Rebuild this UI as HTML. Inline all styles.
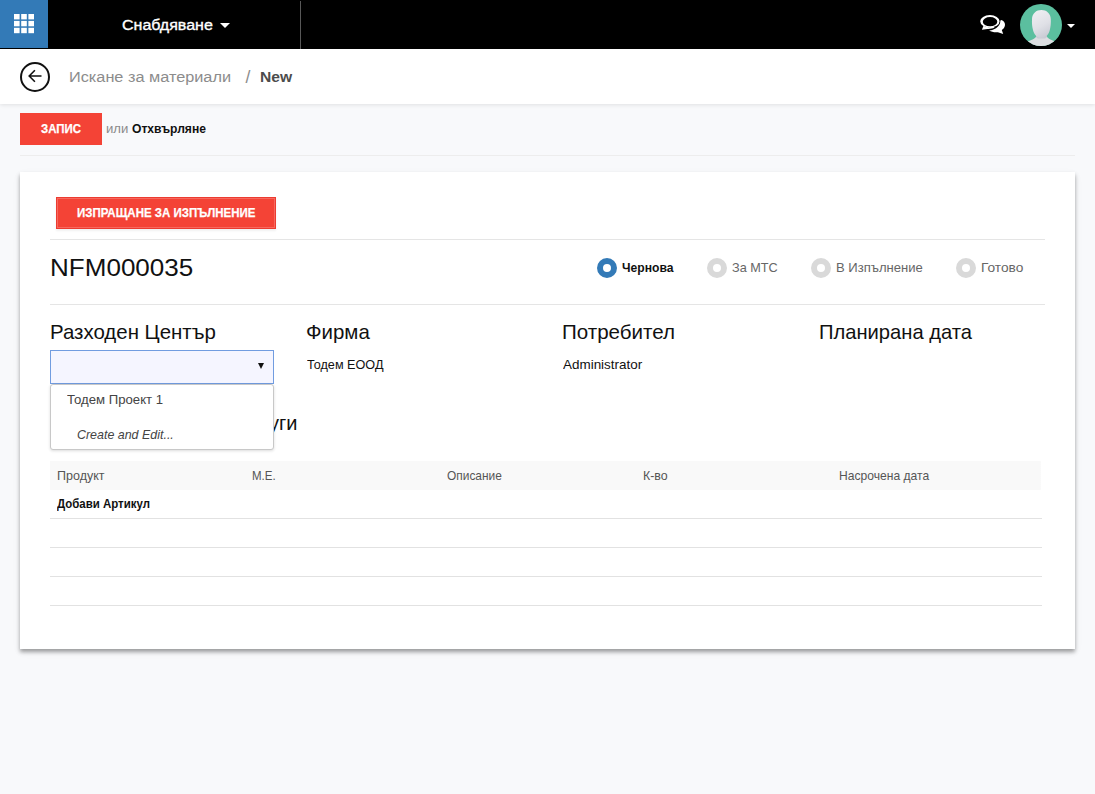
<!DOCTYPE html>
<html lang="bg">
<head>
<meta charset="utf-8">
<title>Искане за материали / New</title>
<style>
html,body{margin:0;padding:0;}
html{background:#f8f9fb;}
body{width:1095px;height:794px;overflow:hidden;position:relative;background:#f8f9fb;font-family:"Liberation Sans",Arial,sans-serif;}
h1,h2,ul,ol,li,button,table,th,td,a{margin:0;padding:0;border:0;box-sizing:content-box;font:inherit;color:inherit;text-decoration:none;list-style:none;background:none;text-align:left;}
.abs{position:absolute;}
.t{position:absolute;white-space:nowrap;line-height:1;transform-origin:0 0;display:block;}
#navbar{left:0;top:0;width:1095px;height:49px;background:#000;}
#apps{left:0;top:0;width:48px;height:48px;background:#337ab7;}
#navsep{left:300px;top:1px;width:1px;height:48px;background:#585858;}
#cp{left:0;top:49px;width:1095px;height:55px;background:#fff;box-shadow:0 1px 4px rgba(0,0,0,0.10);}
#back{left:20px;top:13px;width:26px;height:26px;border:2px solid #111;border-radius:50%;}
#btnsave{left:20px;top:113px;width:82px;height:32px;background:#f44336;}
#hr0{left:20px;top:155px;width:1055px;height:1px;background:#ededed;}
#sheet{left:20px;top:172px;width:1055px;height:477px;background:#fff;box-shadow:0 2.5px 4px rgba(0,0,0,0.36),0 3px 10px rgba(0,0,0,0.04);}
#btnsend{left:36px;top:25px;width:218px;height:30px;background:#f44336;border:1px solid #ec3c31;box-shadow:inset 0 0 0 1px #f7685e,0 2px 2px rgba(0,0,0,0.06);}
.hr{left:30px;width:995px;height:1px;background:#e5e5e5;}
.ring{width:8px;height:8px;border:6px solid #d9d9d9;border-radius:50%;background:#fff;}
.ring.on{border-color:#337ab7;}
#inp{left:30px;top:178px;width:222px;height:32px;background:#f5f5ff;border:1px solid #719ce0;}
#inparrow{left:206.5px;top:12px;width:0;height:0;border-left:3.5px solid transparent;border-right:3.5px solid transparent;border-top:6px solid #111;}
#dd{left:30px;top:212px;width:221.5px;height:63.5px;background:#fff;border:1px solid #c8c8c8;border-radius:3px;box-shadow:0 1px 3px rgba(0,0,0,0.14);}
#lines{left:30px;top:289px;width:992px;border-collapse:separate;border-spacing:0;table-layout:fixed;}
#lines th{height:29px;background:#f9f9f9;}
#lines th:last-child{background:linear-gradient(#f9f9f9,#f9f9f9) no-repeat;background-size:196.9px 29px;}
#lines td{height:28px;border-bottom:1px solid #e2e2e2;}
</style>
</head>
<body>

<nav id="navbar" class="abs">
<a id="apps" class="abs" title="Applications">
<svg class="abs" style="left:14px;top:14px" width="20" height="20" viewBox="0 0 20 20" fill="#fff">
<rect x="0" y="0" width="5.6" height="5.4"/><rect x="7.2" y="0" width="5.6" height="5.4"/><rect x="14.4" y="0" width="5.6" height="5.4"/>
<rect x="0" y="6.9" width="5.6" height="5.4"/><rect x="7.2" y="6.9" width="5.6" height="5.4"/><rect x="14.4" y="6.9" width="5.6" height="5.4"/>
<rect x="0" y="13.8" width="5.6" height="5.4"/><rect x="7.2" y="13.8" width="5.6" height="5.4"/><rect x="14.4" y="13.8" width="5.6" height="5.4"/>
</svg>
</a>
<span id="nav" class="t" style="left:122.26px;top:16.99px;font-size:15.49px;font-weight:400;color:#fff;transform:scaleX(1.0352);-webkit-text-stroke:0.35px #fff;">Снабдяване</span>
<svg class="abs" style="left:220px;top:23px" width="10" height="5" viewBox="0 0 10 5"><path d="M0 0H10L5 5Z" fill="#fff"/></svg>
<div id="navsep" class="abs"></div>
<svg class="abs" style="left:975px;top:10px" width="35" height="28" viewBox="0 0 35 28">
<path d="M26.3 10.1 C28.8 11 30.2 13 30 15 C29.8 17.2 28.6 18.9 26.8 20.1 L28.2 24 L22.9 22.2 C19.5 22.6 16.5 21.9 14.1 20.5 C17 20.3 19 19.5 21 18.3 C23.5 16.8 25.5 14 25.4 10.6Z" fill="#fff"/>
<path d="M4.90 11.30a10.00 6.55 0 1 0 20.00 0a10.00 6.55 0 1 0 -20.00 0Z" fill="#000"/>
<path fill-rule="evenodd" d="M5.20 11.30a9.70 6.25 0 1 0 19.40 0a9.70 6.25 0 1 0 -19.40 0ZM7.80 11.70a7.25 4.60 0 1 0 14.50 0a7.25 4.60 0 1 0 -14.50 0Z" fill="#fff"/>
<path d="M8.6 15.6 L6.9 19.8 L12.5 18.9 C15 19 17.5 18.6 19.8 17.8 L17.5 16.6 C14 17.6 11 17.2 8.6 15.6Z" fill="#fff"/>
</svg>
<svg class="abs" style="left:1020px;top:4px" width="42" height="42" viewBox="0 0 42 42">
<defs><clipPath id="av"><circle cx="21" cy="21" r="21"/></clipPath>
<linearGradient id="hd" x1="0.2" y1="0" x2="0.6" y2="1"><stop offset="0" stop-color="#efeff3"/><stop offset="0.6" stop-color="#dfe0e6"/><stop offset="1" stop-color="#caccd5"/></linearGradient>
<linearGradient id="nk" x1="0" y1="0" x2="0" y2="1"><stop offset="0" stop-color="#9fa2b6"/><stop offset="0.55" stop-color="#c6c8d2"/><stop offset="1" stop-color="#dcdde1"/></linearGradient></defs>
<circle cx="21" cy="21" r="21" fill="#5bbf9f"/>
<g clip-path="url(#av)">
<path d="M6.5 38 C11 36.2 15 35 16.6 32 L26.4 32 C28 35 32 36.2 36.5 38 L39 45 L3 45Z" fill="#dddee2"/>
<path d="M16.4 30 L16.4 33.6 C18.6 36.4 24.2 36.4 26.6 33.6 L26.6 30Z" fill="url(#nk)"/>
<path d="M21.4 6.1 C26.5 6.1 30.6 9.5 30.8 15 C31 19 30.7 23 29.8 26 C28.8 30 26.2 33.8 21.4 33.8 C16.6 33.8 14 30 13 26 C12.1 23 11.8 19 12 15 C12.2 9.5 16.3 6.1 21.4 6.1Z" fill="url(#hd)"/>
</g>
</svg>
<svg class="abs" style="left:1067px;top:24px" width="8" height="4" viewBox="0 0 8 4"><path d="M0 0H8L4 4Z" fill="#fff"/></svg>
</nav>

<header id="cp" class="abs">
<a id="back" class="abs" title="Back"><svg class="abs" style="left:5px;top:4px" width="16" height="16" viewBox="0 0 16 16" fill="none" stroke="#111" stroke-width="1.6"><path d="M14.5 8H2.4M7.9 2.3L2.2 8l5.7 5.7"/></svg></a>
<ol class="breadcrumb">
<li><a id="bc1" class="t" style="left:68.66px;top:19.89px;font-size:15.49px;font-weight:400;color:#8c8c8c;transform:scaleX(1.0515);">Искане за материали</a></li>
<li><span id="bc2" class="t" style="left:245.50px;top:19.94px;font-size:17.56px;font-weight:400;color:#8c8c8c;transform:scaleX(1.0000);">/</span><span id="bc3" class="t" style="left:260.45px;top:19.89px;font-size:15.49px;font-weight:700;color:#4c4c4c;transform:scaleX(1.0086);">New</span></li>
</ol>
</header>

<div class="buttons">
<button id="btnsave" class="abs" type="button"><span id="save" class="t" style="left:21.04px;top:9.70px;font-size:12.40px;font-weight:700;color:#fff;transform:scaleX(0.9230);-webkit-text-stroke:0.25px #fff;">ЗАПИС</span></button>
<span id="or" class="t" style="left:105.94px;top:121.83px;font-size:13.43px;font-weight:400;color:#8a8a8a;transform:scaleX(0.9793);">или</span><a id="disc" class="t" style="left:131.92px;top:121.83px;font-size:13.43px;font-weight:700;color:#111;transform:scaleX(0.9020);">Отхвърляне</a>
</div>
<div id="hr0" class="abs"></div>

<main id="sheet" class="abs">
<button id="btnsend" class="abs" type="button"><span id="send" class="t" style="left:20.49px;top:8.80px;font-size:12.40px;font-weight:700;color:#fff;transform:scaleX(0.9268);-webkit-text-stroke:0.25px #fff;">ИЗПРАЩАНЕ ЗА ИЗПЪЛНЕНИЕ</span></button>
<div class="abs hr" style="top:67px"></div>
<h1 id="name" class="t" style="left:30.26px;top:83.62px;font-size:24.79px;font-weight:400;color:#111;transform:scaleX(1.0507);">NFM000035</h1>
<ul class="statusbar">
<li><i class="abs ring on" style="left:577px;top:85.7px"></i><span id="s1" class="t" style="left:602.17px;top:88.83px;font-size:13.43px;font-weight:700;color:#111;transform:scaleX(0.9032);">Чернова</span></li>
<li><i class="abs ring" style="left:687px;top:85.7px"></i><span id="s2" class="t" style="left:712.10px;top:88.83px;font-size:13.43px;font-weight:400;color:#666;transform:scaleX(0.9453);">За МТС</span></li>
<li><i class="abs ring" style="left:791px;top:85.7px"></i><span id="s3" class="t" style="left:815.76px;top:88.83px;font-size:13.43px;font-weight:400;color:#666;transform:scaleX(0.9729);">В Изпълнение</span></li>
<li><i class="abs ring" style="left:936px;top:85.7px"></i><span id="s4" class="t" style="left:961.28px;top:88.83px;font-size:13.43px;font-weight:400;color:#666;transform:scaleX(1.0214);">Готово</span></li>
</ul>
<div class="abs hr" style="top:132px"></div>
<section class="group">
<h2 id="h1" class="t" style="left:30.07px;top:149.81px;font-size:20.66px;font-weight:400;color:#111;transform:scaleX(0.9892);">Разходен Център</h2>
<h2 id="h2" class="t" style="left:285.87px;top:149.81px;font-size:20.66px;font-weight:400;color:#111;transform:scaleX(0.9902);">Фирма</h2><span id="v2" class="t" style="left:286.80px;top:185.53px;font-size:13.43px;font-weight:400;color:#111;transform:scaleX(0.9416);">Тодем ЕООД</span>
<h2 id="h3" class="t" style="left:542.19px;top:149.81px;font-size:20.66px;font-weight:400;color:#111;transform:scaleX(0.9953);">Потребител</h2><span id="v3" class="t" style="left:543.33px;top:185.53px;font-size:13.43px;font-weight:400;color:#111;transform:scaleX(1.0020);">Administrator</span>
<h2 id="h4" class="t" style="left:798.98px;top:149.81px;font-size:20.66px;font-weight:400;color:#111;transform:scaleX(0.9761);">Планирана дата</h2>
</section>
<h2 id="h5" class="t" style="left:auto;right:777.6px;top:240.77px;font-size:20px;color:#111;">Материали, стоки и услуги</h2>
<table id="lines" class="abs">
<thead><tr><th><span id="th1" class="t" style="left:7.48px;top:8.80px;font-size:12.40px;font-weight:400;color:#555;transform:scaleX(1.0104);">Продукт</span></th><th><span id="th2" class="t" style="left:202.23px;top:8.80px;font-size:12.40px;font-weight:400;color:#555;transform:scaleX(0.9278);">М.Е.</span></th><th><span id="th3" class="t" style="left:397.11px;top:8.80px;font-size:12.40px;font-weight:400;color:#555;transform:scaleX(0.9616);">Описание</span></th><th><span id="th4" class="t" style="left:593.29px;top:8.80px;font-size:12.40px;font-weight:400;color:#555;transform:scaleX(0.9999);">К-во</span></th><th><span id="th5" class="t" style="left:789.33px;top:8.80px;font-size:12.40px;font-weight:400;color:#555;transform:scaleX(0.9759);">Насрочена дата</span></th></tr></thead>
<tbody>
<tr><td colspan="5"><a id="add" class="t" style="left:6.94px;top:37.00px;font-size:12.40px;font-weight:700;color:#111;transform:scaleX(0.9244);">Добави Артикул</a></td></tr>
<tr><td colspan="5"></td></tr>
<tr><td colspan="5"></td></tr>
<tr><td colspan="5"></td></tr>
</tbody>
</table>
<div id="inp" class="abs"><i id="inparrow" class="abs"></i></div>
<ul id="dd" class="abs">
<li><a id="dd1" class="t" style="left:16.22px;top:8.13px;font-size:13.43px;font-weight:400;color:#444;transform:scaleX(0.9803);">Тодем Проект 1</a></li>
<li><a id="dd2" class="t" style="left:25.91px;top:42.93px;font-size:13.43px;font-weight:400;color:#444;transform:scaleX(0.9267);font-style:italic;">Create and Edit...</a></li>
</ul>
</main>
</body>
</html>
